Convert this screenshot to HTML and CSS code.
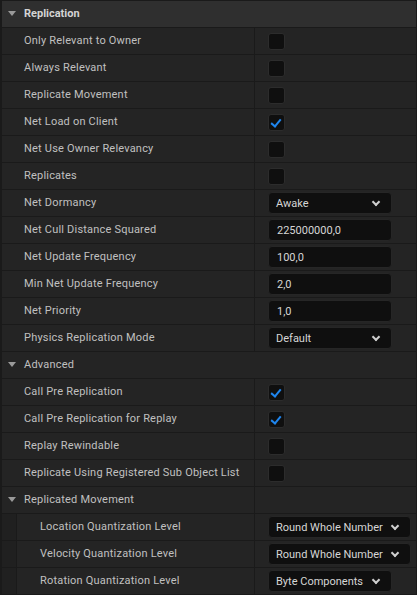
FILE: index.html
```html
<!DOCTYPE html>
<html>
<head>
    <meta charset="UTF-8">
    <title>Replication</title>
    <link rel="stylesheet" href="styles.css">
</head>
<body>
    <div class="panel">
        <div class="row category">
            <div class="name"><span class="arrow"></span><b>Replication</b></div>
        </div>
        <div class="row"><div class="name">Only Relevant to Owner</div><div class="value"><span class="check"></span></div></div>
        <div class="row"><div class="name">Always Relevant</div><div class="value"><span class="check"></span></div></div>
        <div class="row"><div class="name">Replicate Movement</div><div class="value"><span class="check"></span></div></div>
        <div class="row"><div class="name">Net Load on Client</div><div class="value"><span class="check on"></span></div></div>
        <div class="row"><div class="name">Net Use Owner Relevancy</div><div class="value"><span class="check"></span></div></div>
        <div class="row"><div class="name">Replicates</div><div class="value"><span class="check"></span></div></div>
        <div class="row"><div class="name">Net Dormancy</div><div class="value"><span class="combo">Awake<span class="chev"></span></span></div></div>
        <div class="row"><div class="name">Net Cull Distance Squared</div><div class="value"><span class="field">225000000,0</span></div></div>
        <div class="row"><div class="name">Net Update Frequency</div><div class="value"><span class="field">100,0</span></div></div>
        <div class="row"><div class="name">Min Net Update Frequency</div><div class="value"><span class="field">2,0</span></div></div>
        <div class="row"><div class="name">Net Priority</div><div class="value"><span class="field">1,0</span></div></div>
        <div class="row"><div class="name">Physics Replication Mode</div><div class="value"><span class="combo">Default<span class="chev"></span></span></div></div>
        <div class="row group">
            <div class="name"><span class="arrow"></span>Advanced</div>
        </div>
        <div class="row"><div class="name">Call Pre Replication</div><div class="value"><span class="check on"></span></div></div>
        <div class="row"><div class="name">Call Pre Replication for Replay</div><div class="value"><span class="check on"></span></div></div>
        <div class="row"><div class="name">Replay Rewindable</div><div class="value"><span class="check"></span></div></div>
        <div class="row"><div class="name">Replicate Using Registered Sub Object List</div><div class="value"><span class="check"></span></div></div>
        <div class="row">
            <div class="name"><span class="arrow"></span>Replicated Movement</div><div class="value"></div>
        </div>
        <div class="row child"><div class="indent"></div><div class="name">Location Quantization Level</div><div class="value"><span class="combo">Round Whole Number<span class="chev"></span></span></div></div>
        <div class="row child"><div class="indent"></div><div class="name">Velocity Quantization Level</div><div class="value"><span class="combo">Round Whole Number<span class="chev"></span></span></div></div>
        <div class="row child"><div class="indent"></div><div class="name">Rotation Quantization Level</div><div class="value"><span class="combo">Byte Components<span class="chev"></span></span></div></div>
    </div>
</body>
</html>
```

FILE: styles.css
```css
html,
body {
    margin: 0;
    height: 100%;
    background: #1a1a1a;
}
body {
    font-family: "Roboto", "Liberation Sans", sans-serif;
    font-size: 11px;
    color: #c0c0c0;
}
.panel {
    padding: 1px 1px 0 2px;
}
.row {
    display: flex;
    height: 26px;
    border-bottom: 1px solid #1a1a1a;
    background: #242424;
}
.row .name {
    box-sizing: border-box;
    display: flex;
    align-items: center;
    width: 253px;
    padding: 0 0 1px 22px;
    border-right: 1px solid #1a1a1a;
    white-space: nowrap;
    letter-spacing: 0.2px;
}
.row .value {
    display: flex;
    align-items: center;
    flex: 1;
    padding-left: 13px;
}
.category {
    background: #2f2f2f;
}
.category .name,
.group .name {
    border-right: none;
}
.category b {
    color: #d4d4d4;
    font-weight: bold;
    letter-spacing: 0;
}
.arrow {
    width: 0;
    height: 0;
    margin-left: -16px;
    margin-right: 8px;
    border-left: 4px solid transparent;
    border-right: 4px solid transparent;
    border-top: 5px solid #9a9a9a;
}

/* nested struct members */
.child .indent {
    width: 14px;
    border-right: 1px solid #1a1a1a;
    background: #202020;
}
.child .name {
    width: 238px;
    padding-left: 23px;
}

/* value widgets */
.check {
    position: relative;
    width: 15px;
    height: 15px;
    background: #0f0f0f;
    border: 1px solid #2c2c2c;
    border-radius: 3px;
}
.check.on::after {
    content: "";
    position: absolute;
    left: 4px;
    top: 2px;
    width: 4px;
    height: 8px;
    border-right: 2px solid #1f86ef;
    border-bottom: 2px solid #1f86ef;
    transform: rotate(40deg);
}
.field,
.combo {
    box-sizing: border-box;
    display: flex;
    align-items: center;
    height: 22px;
    background: #0f0f0f;
    border: 1px solid #262626;
    border-radius: 4px;
    color: #d6d6d6;
}
.field {
    width: 124px;
    padding-left: 8px;
}
.combo {
    min-width: 124px;
    padding: 0 12px 0 7px;
    justify-content: space-between;
}
.chev {
    width: 4px;
    height: 4px;
    margin-left: 9px;
    margin-top: -3px;
    border-right: 2px solid #cfcfcf;
    border-bottom: 2px solid #cfcfcf;
    transform: rotate(45deg);
}
```
